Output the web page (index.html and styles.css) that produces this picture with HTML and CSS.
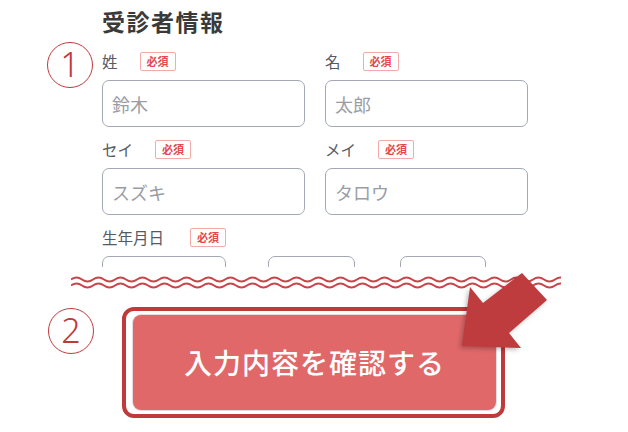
FILE: index.html
```html
<!DOCTYPE html>
<html lang="ja">
<head>
<meta charset="utf-8">
<link rel="stylesheet" href="styles.css">
</head>
<body>
<div class="page">
  <section class="form-area">
    <div class="marker marker-one">1</div>
    <div class="form">
      <h1 class="title">受診者情報</h1>
      <div class="grid">
        <div class="field">
          <div class="label-row"><span class="label">姓</span><span class="badge">必須</span></div>
          <div class="input"><span class="ph">鈴木</span></div>
        </div>
        <div class="field">
          <div class="label-row"><span class="label">名</span><span class="badge">必須</span></div>
          <div class="input"><span class="ph">太郎</span></div>
        </div>
        <div class="field">
          <div class="label-row"><span class="label">セイ</span><span class="badge">必須</span></div>
          <div class="input"><span class="ph">スズキ</span></div>
        </div>
        <div class="field">
          <div class="label-row"><span class="label">メイ</span><span class="badge">必須</span></div>
          <div class="input"><span class="ph">タロウ</span></div>
        </div>
        <div class="field field-wide">
          <div class="label-row label-row-wide"><span class="label">生年月日</span><span class="badge">必須</span></div>
          <div class="date-row">
            <div class="input date-year"></div>
            <div class="input date-month"></div>
            <div class="input date-day"></div>
          </div>
        </div>
      </div>
    </div>
  </section>

  <svg class="wave" width="490" height="20" viewBox="0 0 490 20">
    <path d="M0,7.5 q5.5,-4 11,0 t11,0 t11,0 t11,0 t11,0 t11,0 t11,0 t11,0 t11,0 t11,0 t11,0 t11,0 t11,0 t11,0 t11,0 t11,0 t11,0 t11,0 t11,0 t11,0 t11,0 t11,0 t11,0 t11,0 t11,0 t11,0 t11,0 t11,0 t11,0 t11,0 t11,0 t11,0 t11,0 t11,0 t11,0 t11,0 t11,0 t11,0 t11,0 t11,0 t11,0 t11,0 t11,0 t11,0 t11,0" />
    <path d="M0,13.5 q5.5,-4 11,0 t11,0 t11,0 t11,0 t11,0 t11,0 t11,0 t11,0 t11,0 t11,0 t11,0 t11,0 t11,0 t11,0 t11,0 t11,0 t11,0 t11,0 t11,0 t11,0 t11,0 t11,0 t11,0 t11,0 t11,0 t11,0 t11,0 t11,0 t11,0 t11,0 t11,0 t11,0 t11,0 t11,0 t11,0 t11,0 t11,0 t11,0 t11,0 t11,0 t11,0 t11,0 t11,0 t11,0 t11,0" />
  </svg>

  <section class="cta-area">
    <div class="marker marker-two">2</div>
    <div class="cta-frame">
      <div class="cta">入力内容を確認する</div>
    </div>
  </section>

  <svg class="arrow" width="628" height="432" viewBox="0 0 628 432">
    <polygon points="462,346 470,287 483,303 522,273 547,300 509,333 521,348" />
  </svg>
</div>
</body>
</html>
```

FILE: styles.css
```css
* { box-sizing: border-box; }
html, body { margin: 0; padding: 0; background: #ffffff; }
body {
  font-family: "Noto Sans CJK JP", "Noto Sans", sans-serif;
  color: #333;
}
.page {
  position: relative;
  width: 628px;
  height: 432px;
  overflow: hidden;
}
.form-area {
  display: flex;
  height: 267px;
  overflow: hidden;
}
.marker {
  flex: none;
  width: 46px;
  height: 46px;
  border: 1.5px solid #c0393b;
  border-radius: 50%;
  color: #c0393b;
  font-family: "Noto Sans", "DejaVu Sans", sans-serif;
  font-weight: 300;
  font-size: 34px;
  line-height: 42px;
  text-align: center;
}
.marker-one { margin: 42px 0 0 47px; }
.form {
  margin-left: 9px;
  padding-top: 6px;
}
.title {
  margin: 0 0 16px 0;
  font-size: 23px;
  line-height: 30px;
  font-weight: 700;
  color: #3a3a3a;
  letter-spacing: 1.5px;
}
.grid {
  display: grid;
  grid-template-columns: 203px 203px;
  column-gap: 20px;
  row-gap: 13px;
}
.field-wide { grid-column: 1 / -1; }
.label-row {
  display: flex;
  align-items: center;
  gap: 22px;
  height: 19px;
}
.label-row-wide { gap: 26px; }
.label {
  font-size: 15.5px;
  color: #555a63;
  line-height: 19px;
}
.badge {
  display: inline-block;
  height: 19px;
  padding: 0 6px;
  border: 1px solid #f6a9a9;
  border-radius: 2px;
  color: #e5474f;
  font-size: 11px;
  font-weight: 700;
  line-height: 17px;
}
.input {
  margin-top: 9px;
  height: 47px;
  border: 1.5px solid #a3a8b4;
  border-radius: 7px;
  background: #fff;
  display: flex;
  align-items: center;
  padding-left: 9px;
}
.ph {
  font-size: 18px;
  color: #9a9da5;
}
.date-row {
  display: flex;
  align-items: flex-start;
}
.date-year { width: 124px; flex: none; }
.date-month { width: 87px; flex: none; margin-left: 42px; }
.date-day { width: 86px; flex: none; margin-left: 45px; }
.wave {
  display: block;
  margin: 5px 0 0 71px;
  fill: none;
  stroke: #c8454a;
  stroke-width: 2;
}
.cta-area {
  display: flex;
  padding-top: 15px;
}
.marker-two { margin: 1px 0 0 48px; }
.cta-frame {
  margin-left: 28px;
  padding: 4px 5px 4px 7px;
  border: 4px solid #c0393b;
  border-radius: 12px;
  background: #fff;
}
.cta {
  width: 363px;
  height: 95px;
  border-radius: 8px;
  background: #e06869;
  box-shadow: 0 0 0 1px rgba(180, 150, 160, 0.35);
  color: #fff;
  font-size: 28px;
  font-weight: 500;
  letter-spacing: 1px;
  display: flex;
  align-items: center;
  justify-content: center;
  padding-bottom: 1px;
}
.arrow {
  position: absolute;
  left: 0;
  top: 0;
  pointer-events: none;
  fill: #be3c3e;
  filter: drop-shadow(-2px 2px 2px rgba(0, 0, 0, 0.25));
}
```
